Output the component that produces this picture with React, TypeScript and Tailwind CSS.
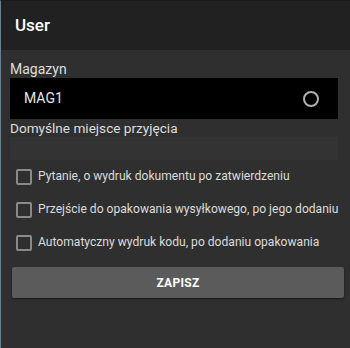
import React from "react";

function Check({ label }: { label: string }) {
  return (
    <div className="flex items-center h-[33px] pl-[15px]">
      <div className="w-[16px] h-[16px] border-2 border-[#8a8a8a] rounded-[2px] shrink-0" />
      <span className="ml-[6px] text-[12.1px] text-[#dcdcdc] leading-none whitespace-nowrap">{label}</span>
    </div>
  );
}

export default function App() {
  return (
    <div className="w-[350px] h-[348px] bg-[#2f2f2f] flex flex-col border-l border-[#6b7f8c] border-t border-t-[#1a1a1a]" style={{ fontFamily: "Roboto, 'Noto Sans', sans-serif" }}>
      <div className="h-[49px] bg-[#212121] flex items-center pl-[14px] shrink-0">
        <span className="text-white text-[17px] font-medium">User</span>
      </div>
      <div className="flex flex-col px-[9px]">
        <div className="text-[14px] text-[#dedede] mt-[11px] leading-[17px]">Magazyn</div>
        <div className="h-[41px] bg-black flex items-center justify-between pl-[14px] pr-[19px] mr-[3px]">
          <span className="text-[14px] text-[#e6e6e6]">MAG1</span>
          <div className="w-[16px] h-[16px] rounded-full border-2 border-[#b0b0b0]" />
        </div>
        <div className="text-[13.6px] text-[#dedede] mt-[1px] leading-[16px]">Domyślne miejsce przyjęcia</div>
        <div className="h-[23px] bg-[#333333] mt-[1px] mr-[3px]" />
      </div>
      <div className="flex flex-col">
        <Check label="Pytanie, o wydruk dokumentu po zatwierdzeniu" />
        <Check label="Przejście do opakowania wysyłkowego, po jego dodaniu" />
        <Check label="Automatyczny wydruk kodu, po dodaniu opakowania" />
      </div>
      <div className="px-[11px] mt-[8px]">
        <div className="h-[31px] w-[332px] bg-[#5b5b5b] rounded-[2px] shadow-[0_1px_2px_rgba(0,0,0,0.5)] flex items-center justify-center">
          <span className="text-white text-[12px] font-bold tracking-[0.3px]">ZAPISZ</span>
        </div>
      </div>
    </div>
  );
}
